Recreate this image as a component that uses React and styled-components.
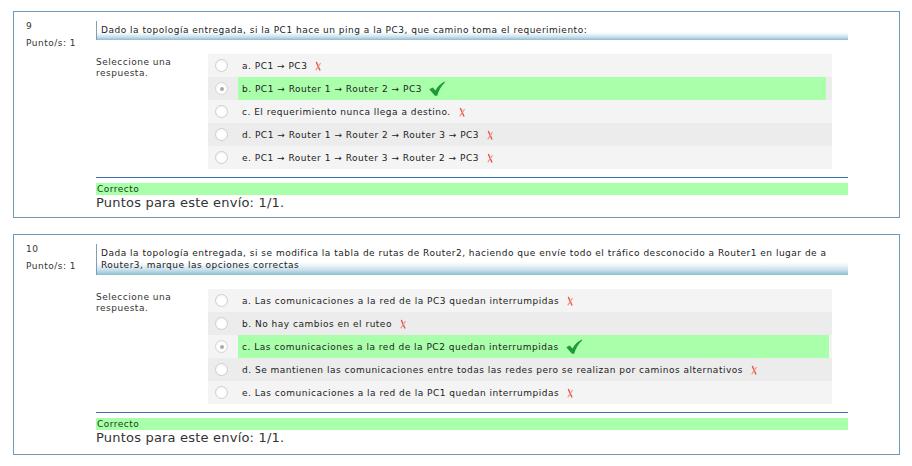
import styled, { createGlobalStyle } from "styled-components";

const GlobalStyle = createGlobalStyle`
  html, body {
    margin: 0;
    padding: 0;
    background: #ffffff;
  }
  body {
    font-family: "DejaVu Sans", Verdana, sans-serif;
    color: #333333;
    letter-spacing: 0.5px;
  }
`;

const Page = styled.div`
  padding: 11px 13px 0 13px;
  display: flex;
  flex-direction: column;
  gap: 16px;
`;

const Que = styled.div`
  box-sizing: border-box;
  width: 887px;
  border: 1px solid #6f9ab8;
  padding: 9px 51px ${(p) => p.$bottom}px 12px;
  display: flex;
`;

const Info = styled.div`
  width: 70px;
  flex: none;
  font-size: 9px;
  line-height: 11px;
  color: #333;
`;

const QNo = styled.div`
  margin-bottom: 6px;
`;

const Content = styled.div`
  flex: 1;
  min-width: 0;
`;

const QText = styled.div`
  border-left: 1px solid #7d9fbf;
  padding: 3px 6px 4px 4px;
  font-size: 9px;
  line-height: 12px;
  color: #222;
  background: linear-gradient(
    to bottom,
    #ffffff 0%,
    #ffffff 58%,
    #eef5f9 68%,
    #c8e0ec 84%,
    #8fbccf 100%
  );
`;

const Ablock = styled.div`
  margin-top: 14px;
  display: flex;
`;

const Prompt = styled.div`
  width: 112px;
  flex: none;
  padding-top: 3px;
  font-size: 9px;
  line-height: 11px;
  color: #333;
`;

const Answers = styled.div`
  width: 624px;
  display: flex;
  flex-direction: column;
`;

const Row = styled.div`
  height: 23px;
  display: flex;
  align-items: stretch;
  background: ${(p) => (p.$alt ? "#ececec" : "#f4f4f4")};
`;

const RadioCell = styled.div`
  box-sizing: border-box;
  width: 30px;
  flex: none;
  padding-left: 7px;
  display: flex;
  align-items: center;
`;

const Radio = styled.span`
  box-sizing: border-box;
  width: 13px;
  height: 13px;
  border-radius: 50%;
  border: 1px solid ${(p) => (p.$checked ? "#d6d6d6" : "#cfcfcf")};
  background: radial-gradient(circle at 50% 60%, #ffffff 40%, #f1f1f1 100%);
  display: flex;
  align-items: center;
  justify-content: center;

  &::after {
    content: "";
    display: ${(p) => (p.$checked ? "block" : "none")};
    width: 4px;
    height: 4px;
    border-radius: 50%;
    background: #a9a9a9;
  }
`;

const Label = styled.div`
  margin-right: ${(p) => p.$gap}px;
  flex: ${(p) => (p.$correct ? 1 : "none")};
  display: flex;
  align-items: center;
  gap: 7px;
  padding-left: 4px;
  font-size: 9px;
  color: #222;
  white-space: nowrap;
  background: ${(p) => (p.$correct ? "#aaffaa" : "transparent")};
`;

const Feedback = styled.div`
  margin-top: 8px;
  border-top: 1px solid #3a6eb5;
  padding-top: 5px;
`;

const Grade = styled.div`
  background: #aaffaa;
  height: 12px;
  font-size: 9px;
  line-height: 13px;
  color: #114411;
  padding-left: 1px;
`;

const Score = styled.div`
  font-size: 13px;
  line-height: 15px;
  letter-spacing: 0.2px;
  color: #333;
`;

const Cross = () => (
  <svg width="8" height="10" viewBox="0 0 8 10">
    <path d="M2.5 1.5 L5.8 9" stroke="#e4564c" strokeWidth="1.4" strokeLinecap="round" />
    <path d="M6.3 2.5 L2 8.8" stroke="#f29488" strokeWidth="1.2" strokeLinecap="round" />
  </svg>
);

const Check = () => (
  <svg width="16" height="15" viewBox="0 0 16 15">
    <path
      d="M0.3 8.3 L3.8 6.4 L6.4 9.6 C8.6 5.6 11.6 2.4 15.8 0.4 L16 1.6 C12.6 4.6 10 9 8.2 14.8 L5.9 14.8 Z"
      fill="#1d9a3b"
    />
  </svg>
);

const questions = [
  {
    no: "9",
    bottom: 7,
    text: "Dado la topología entregada, si la PC1 hace un ping a la PC3, que camino toma el requerimiento:",
    gap: 6,
    answers: [
      "a. PC1 → PC3",
      "b. PC1 → Router 1 → Router 2 → PC3",
      "c. El requerimiento nunca llega a destino.",
      "d. PC1 → Router 1 → Router 2 → Router 3 → PC3",
      "e. PC1 → Router 1 → Router 3 → Router 2 → PC3",
    ],
    correct: 1,
  },
  {
    no: "10",
    bottom: 9,
    text: "Dada la topología entregada, si se modifica la tabla de rutas de Router2, haciendo que envíe todo el tráfico desconocido a Router1 en lugar de a Router3, marque las opciones correctas",
    gap: 3,
    answers: [
      "a. Las comunicaciones a la red de la PC3 quedan interrumpidas",
      "b. No hay cambios en el ruteo",
      "c. Las comunicaciones a la red de la PC2 quedan interrumpidas",
      "d. Se mantienen las comunicaciones entre todas las redes pero se realizan por caminos alternativos",
      "e. Las comunicaciones a la red de la PC1 quedan interrumpidas",
    ],
    correct: 2,
  },
];

const Question = ({ q }) => (
  <Que $bottom={q.bottom}>
    <Info>
      <QNo>{q.no}</QNo>
      <div>Punto/s: 1</div>
    </Info>
    <Content>
      <QText>{q.text}</QText>
      <Ablock>
        <Prompt>
          Seleccione una
          <br />
          respuesta.
        </Prompt>
        <Answers>
          {q.answers.map((a, i) => (
            <Row key={i} $alt={i % 2 === 1}>
              <RadioCell>
                <Radio $checked={i === q.correct} />
              </RadioCell>
              <Label $correct={i === q.correct} $gap={q.gap}>
                {a}
                {i === q.correct ? <Check /> : <Cross />}
              </Label>
            </Row>
          ))}
        </Answers>
      </Ablock>
      <Feedback>
        <Grade>Correcto</Grade>
        <Score>Puntos para este envío: 1/1.</Score>
      </Feedback>
    </Content>
  </Que>
);

export default function App() {
  return (
    <>
      <GlobalStyle />
      <Page>
        {questions.map((q) => (
          <Question key={q.no} q={q} />
        ))}
      </Page>
    </>
  );
}
